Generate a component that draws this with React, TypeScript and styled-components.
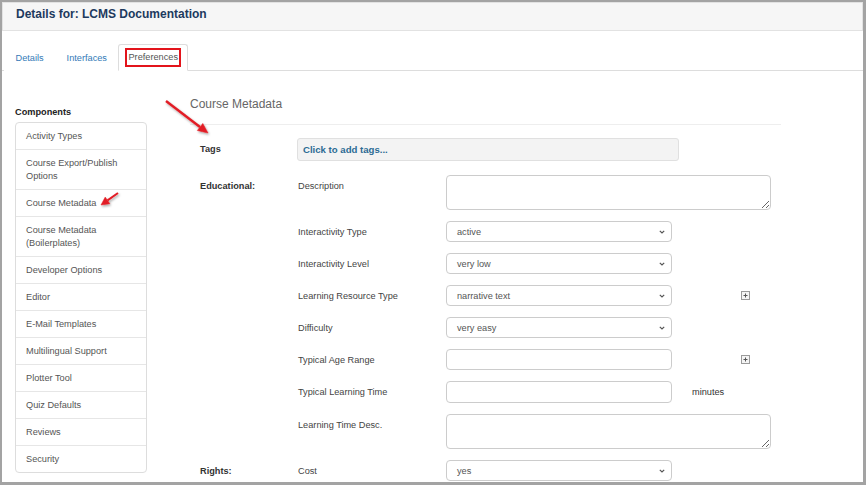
import React from "react"
import styled, { createGlobalStyle } from "styled-components"

const GlobalStyle = createGlobalStyle`
    html, body {
        margin: 0;
        padding: 0;
        background: #fff;
    }
    body {
        font-family: "Liberation Sans", Arial, sans-serif;
    }
    * {
        box-sizing: border-box;
    }
`

const Frame = styled.div`
    position: relative;
    width: 866px;
    height: 485px;
    border: 2px solid #a3a3a3;
    border-right-width: 3px;
    border-bottom-width: 3px;
    overflow: hidden;
    background: #fff;
`

const Header = styled.header`
    height: 29px;
    background: #f6f6f6;
    border: 1px solid #e2e2e2;
    padding: 4px 0 0 13px;
`

const Title = styled.h1`
    margin: 0;
    font-size: 12px;
    line-height: 14px;
    font-weight: bold;
    color: #1d3a5e;
`

const TabBar = styled.nav`
    display: flex;
    margin-top: 13px;
    padding-left: 2px;
    border-bottom: 1px solid #dddddd;
`

const Tab = styled.div<{ $active?: boolean }>`
    height: 27px;
    margin-bottom: -1px;
    display: flex;
    align-items: center;
    padding: 0 ${(p) => (p.$active ? 6 : 10.5)}px;
    font-size: 9.2px;
    color: ${(p) => (p.$active ? "#555" : "#337ab7")};
    background: #fff;
    border: 1px solid ${(p) => (p.$active ? "#dddddd" : "transparent")};
    border-bottom-color: ${(p) => (p.$active ? "#fff" : "transparent")};
    border-radius: 3px 3px 0 0;
`

const Marked = styled.span`
    border: 2px solid #e3141b;
    padding: 0 1px;
    line-height: 15px;
`

const Body = styled.div`
    display: flex;
    align-items: flex-start;
    padding: 26px 0 0 13px;
`

const Sidebar = styled.aside`
    width: 132px;
    margin-top: 9px;
    flex-shrink: 0;
`

const SideTitle = styled.div`
    font-size: 9.2px;
    line-height: 12px;
    font-weight: bold;
    color: #222;
    margin-bottom: 4px;
`

const SideList = styled.ul`
    list-style: none;
    margin: 0;
    padding: 0;
    border: 1px solid #dddddd;
    border-radius: 4px;
`

const SideItem = styled.li`
    padding: 7px 10px 6px;
    font-size: 9.2px;
    line-height: 13px;
    color: #555;
    & + & {
        border-top: 1px solid #e6e6e6;
    }
`

const Main = styled.main`
    width: 591px;
    margin-left: 43px;
`

const Heading = styled.h2`
    margin: 0;
    font-size: 12px;
    line-height: 14px;
    font-weight: normal;
    color: #666;
    padding-bottom: 13px;
    border-bottom: 1px solid #eeeeee;
`

const FormGrid = styled.div`
    display: grid;
    grid-template-columns: 98px 148px 1fr;
    row-gap: 11px;
    align-items: start;
    margin-top: 13px;
    padding-left: 10px;
`

const GroupLabel = styled.div`
    padding-top: 1px;
    font-size: 9.2px;
    line-height: 20px;
    font-weight: bold;
    color: #333;
`

const FieldLabel = styled.div`
    padding-top: 1px;
    font-size: 9.2px;
    line-height: 20px;
    color: #444;
`

const Cell = styled.div`
    display: flex;
    align-items: center;
`

const TagsBox = styled.div`
    grid-column: 2 / span 2;
    margin-left: -1px;
    margin-bottom: 3px;
    width: 382px;
    height: 23px;
    display: flex;
    align-items: center;
    padding-left: 5px;
    background: #f3f3f3;
    border: 1px solid #e0e0e0;
    border-radius: 3px;
    font-size: 9.6px;
    font-weight: bold;
    color: #2b6b93;
`

const SelectBox = styled.div`
    width: 226px;
    height: 21px;
    display: flex;
    align-items: center;
    justify-content: space-between;
    padding: 0 6px 0 10px;
    border: 1px solid #cccccc;
    border-radius: 4px;
    background: #fff;
    font-size: 9.2px;
    color: #555;
`

const TextInput = styled.input<{ $tall?: boolean }>`
    width: 226px;
    height: ${(p) => (p.$tall ? 22 : 21)}px;
    margin: 0;
    border: 1px solid #cccccc;
    border-radius: 4px;
    background: #fff;
    font: inherit;
`

const TextArea = styled.textarea`
    display: block;
    width: 325px;
    height: 35px;
    margin: 0;
    border: 1px solid #cccccc;
    border-radius: 4px;
    background: #fff;
    font: inherit;
`

const Aside = styled.span<{ $gap: number }>`
    margin-left: ${(p) => p.$gap}px;
    font-size: 9.2px;
    color: #333;
    display: flex;
`

const Overlay = styled.svg`
    position: absolute;
    left: -2px;
    top: -2px;
    width: 866px;
    height: 485px;
    pointer-events: none;
`

const Chevron = () => (
    <svg width="6" height="4" viewBox="0 0 6 4">
        <polyline points="0.8,0.8 3,3 5.2,0.8" fill="none" stroke="#555" strokeWidth="1.2" />
    </svg>
)

const PlusBox = () => (
    <svg width="9" height="9" viewBox="0 0 9 9">
        <rect x="0.5" y="0.5" width="8" height="8" fill="#f4f4f4" stroke="#9a9a9a" />
        <line x1="2.5" y1="4.5" x2="6.5" y2="4.5" stroke="#555" />
        <line x1="4.5" y1="2.5" x2="4.5" y2="6.5" stroke="#555" />
    </svg>
)

const Select = ({ value }: { value: string }) => (
    <SelectBox>
        <span>{value}</span>
        <Chevron />
    </SelectBox>
)

const components = [
    "Activity Types",
    "Course Export/Publish Options",
    "Course Metadata",
    "Course Metadata (Boilerplates)",
    "Developer Options",
    "Editor",
    "E-Mail Templates",
    "Multilingual Support",
    "Plotter Tool",
    "Quiz Defaults",
    "Reviews",
    "Security",
]

const App = () => {
    return (
        <>
            <GlobalStyle />
            <Frame>
                <Header>
                    <Title>Details for: LCMS Documentation</Title>
                </Header>
                <TabBar>
                    <Tab>Details</Tab>
                    <Tab>Interfaces</Tab>
                    <Tab $active>
                        <Marked>Preferences</Marked>
                    </Tab>
                </TabBar>
                <Body>
                    <Sidebar>
                        <SideTitle>Components</SideTitle>
                        <SideList>
                            {components.map((c) => (
                                <SideItem key={c}>{c}</SideItem>
                            ))}
                        </SideList>
                    </Sidebar>
                    <Main>
                        <Heading>Course Metadata</Heading>
                        <FormGrid>
                            <GroupLabel>Tags</GroupLabel>
                            <TagsBox>Click to add tags...</TagsBox>

                            <GroupLabel>Educational:</GroupLabel>
                            <FieldLabel>Description</FieldLabel>
                            <Cell>
                                <TextArea readOnly />
                            </Cell>

                            <span />
                            <FieldLabel>Interactivity Type</FieldLabel>
                            <Cell>
                                <Select value="active" />
                            </Cell>

                            <span />
                            <FieldLabel>Interactivity Level</FieldLabel>
                            <Cell>
                                <Select value="very low" />
                            </Cell>

                            <span />
                            <FieldLabel>Learning Resource Type</FieldLabel>
                            <Cell>
                                <Select value="narrative text" />
                                <Aside $gap={69}>
                                    <PlusBox />
                                </Aside>
                            </Cell>

                            <span />
                            <FieldLabel>Difficulty</FieldLabel>
                            <Cell>
                                <Select value="very easy" />
                            </Cell>

                            <span />
                            <FieldLabel>Typical Age Range</FieldLabel>
                            <Cell>
                                <TextInput readOnly />
                                <Aside $gap={69}>
                                    <PlusBox />
                                </Aside>
                            </Cell>

                            <span />
                            <FieldLabel>Typical Learning Time</FieldLabel>
                            <Cell>
                                <TextInput readOnly $tall />
                                <Aside $gap={20}>minutes</Aside>
                            </Cell>

                            <span />
                            <FieldLabel>Learning Time Desc.</FieldLabel>
                            <Cell>
                                <TextArea readOnly />
                            </Cell>

                            <GroupLabel>Rights:</GroupLabel>
                            <FieldLabel>Cost</FieldLabel>
                            <Cell>
                                <Select value="yes" />
                            </Cell>
                        </FormGrid>
                    </Main>
                </Body>
                <Overlay viewBox="0 0 866 485">
                    <defs>
                        <filter id="sh" x="-20%" y="-20%" width="140%" height="140%">
                            <feDropShadow dx="1" dy="1.5" stdDeviation="1" floodColor="#000" floodOpacity="0.35" />
                        </filter>
                    </defs>
                    <g fill="#e21f26" stroke="#e21f26" filter="url(#sh)">
                        <line x1="166" y1="101" x2="200" y2="127" strokeWidth="2.4" />
                        <polygon points="208,133 197.3,130.5 202.8,123.4" strokeWidth="0.5" />
                        <line x1="118" y1="193" x2="107.5" y2="200.4" strokeWidth="2" />
                        <polygon points="101,205 105.2,197.1 109.8,203.7" strokeWidth="0.5" />
                    </g>
                </Overlay>
            </Frame>
        </>
    )
}

export default App
